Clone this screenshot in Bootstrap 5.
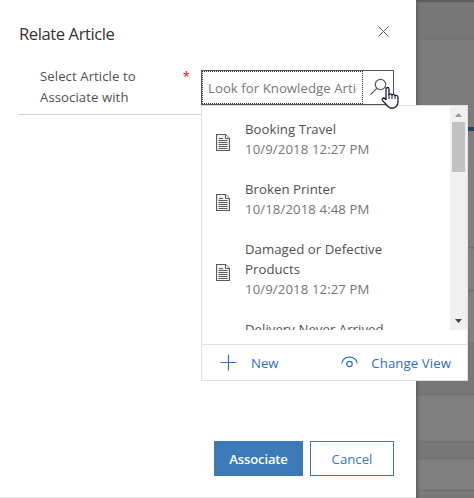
<!DOCTYPE html>
<html lang="en">
<head>
<meta charset="utf-8">
<meta name="viewport" content="width=device-width, initial-scale=1">
<title>Relate Article</title>
<link href="https://cdn.jsdelivr.net/npm/bootstrap@5.3.0/dist/css/bootstrap.min.css" rel="stylesheet">
<style>
body{font-family:"Open Sans","Noto Sans",sans-serif;font-size:13.2px;line-height:20px;color:#505050;height:498px}
.dialog-pane{width:416px;height:498px;border-bottom:1px solid #e6e6e6}
.page-behind{width:58px;height:498px;background:#7b7b7b;box-shadow:inset 3px 0 3px -1px #606060}
.page-behind div{flex:none}
.b-top{height:2px;background:#5c5c5c}
.b-head{height:38px;background:#777}
.b-mid{height:87px}
.b-blue{height:4px;background:#1f4266}
.b-line{height:1px;background:#6f6f6f}
.b-light{background:#808080}
.b-dark{background:#777}
.page-behind .b-light,.page-behind .b-dark,.page-behind .b-head,.page-behind .b-top{box-shadow:inset 3px 0 3px -1px #606060}
.dialog-title{font-size:16.6px;line-height:24px;color:#333;letter-spacing:-.42px;padding:22px 0 0 19px;height:65px}
.close-x{padding:25px 26px 0 0}
.field-row{margin-left:19px;width:182px;height:50px;border-bottom:1px solid #d2d2d2;padding:1px 0 0 21px;line-height:21px;letter-spacing:.06px}
.req{color:#f00;margin-right:11px;line-height:20px;font-size:13px}
.lookup{width:193px;height:35px;margin-top:5px;border:1px solid #555;color:#777}
.lookup-text{width:161px;border:1px dotted #333;padding-left:5px;line-height:32px;overflow:hidden;white-space:nowrap}
.lookup-text span{display:block;width:149px;overflow:hidden;letter-spacing:.04px}
.flyout{left:201px;top:105px;width:267px;height:276px;border:1px solid #e0e0e0;background:#fff}
.results{height:224px;overflow:hidden;padding-top:4px}
.result{padding:10px 0;line-height:20px;letter-spacing:.04px}
.result>div{margin-top:-1px;margin-bottom:1px}
.result svg{margin:0 15px 0 14px;position:relative;top:2px}
.result small{display:block;font-size:13.2px;color:#757575;letter-spacing:.1px}
.track{width:17px;height:224px;background:#f0f0f0}
.thumb{width:13px;height:50px;background:#c1c1c1;margin-top:5px}
.flyout-foot{margin-top:14px;height:36px;border-top:1px solid #e0e0e0;color:#2b6fc2}
.action{height:35px;border-radius:0;font-size:13.2px;line-height:20px;padding:0;border:1px solid #3b79b7}
.actions{margin:326px 0 0 214px}
.a-go{width:89px;background:#3b79b7;color:#fff;font-weight:600;letter-spacing:-.2px}
.a-no{width:84px;background:#fff;color:#3b79b7}
.pointer{left:381px;top:86px}
</style>
</head>
<body class="m-0 overflow-hidden position-relative">
<div class="d-flex">
  <main class="dialog-pane bg-white flex-shrink-0">
    <header class="d-flex justify-content-between">
      <h1 class="dialog-title m-0 fw-normal">Relate Article</h1>
      <div class="close-x"><svg class="d-block" width="13" height="13" viewBox="0 0 13 13" stroke="#555" fill="none"><path d="M1.5 1.5l10 10M11.5 1.5l-10 10"/></svg></div>
    </header>
    <div class="d-flex">
      <div class="field-row d-flex justify-content-between flex-shrink-0"><label>Select Article to<br>Associate with</label><span class="req">*</span></div>
      <div class="lookup d-flex flex-shrink-0">
        <div class="lookup-text flex-shrink-0"><span>Look for Knowledge Articles</span></div>
        <svg width="29" height="33" viewBox="0 0 29 33" fill="none" stroke="#555" stroke-width="1.2"><circle cx="17.500" cy="13.5" r="5.2"/><path d="M13.800 17.3L7.500 23.6"/></svg>
      </div>
    </div>
    <div class="actions d-flex">
      <button class="btn action a-go" type="button">Associate</button>
      <button class="btn action a-no" type="button" style="margin-left:7px">Cancel</button>
    </div>
  </main>
  <aside class="page-behind d-flex flex-column flex-shrink-0">
    <div class="b-top"></div><div class="b-head"></div><div class="b-mid"></div><div class="b-blue"></div>
    <div class="b-light" style="height:116px"></div><div class="b-line"></div>
    <div class="b-light" style="height:42px"></div><div class="b-line"></div>
    <div class="b-light" style="height:52px"></div>
    <div class="b-dark" style="height:52px"></div>
    <div class="b-light" style="height:46px"></div>
    <div class="b-dark" style="height:18px"></div>
    <div class="b-light" style="height:31px"></div><div class="b-line"></div>
  </aside>
</div>

<section class="flyout position-absolute">
  <div class="d-flex">
    <div class="results flex-grow-1">
      <div class="result d-flex align-items-center"><svg width="14" height="17" viewBox="0 0 14 17" fill="#f2f2f2" stroke="#5a5a5a"><path d="M.5.5h9l4 4v12H.5z" stroke-width="1.200"/><path d="M9.5.5v4h4M3 4.500h4M2.500 6.5h9M2.500 8.5h9M2.500 10.5h9M2.500 12.5h9M2.500 14.5h9"/></svg><div>Booking Travel<small>10/9/2018 12:27 PM</small></div></div>
      <div class="result d-flex align-items-center"><svg width="14" height="17" viewBox="0 0 14 17" fill="#f2f2f2" stroke="#5a5a5a"><path d="M.5.5h9l4 4v12H.5z" stroke-width="1.200"/><path d="M9.5.5v4h4M3 4.500h4M2.500 6.5h9M2.500 8.5h9M2.500 10.5h9M2.500 12.5h9M2.500 14.5h9"/></svg><div>Broken Printer<small>10/18/2018 4:48 PM</small></div></div>
      <div class="result d-flex align-items-center"><svg width="14" height="17" viewBox="0 0 14 17" fill="#f2f2f2" stroke="#5a5a5a"><path d="M.5.5h9l4 4v12H.5z" stroke-width="1.200"/><path d="M9.5.5v4h4M3 4.500h4M2.500 6.5h9M2.500 8.5h9M2.500 10.5h9M2.500 12.5h9M2.500 14.5h9"/></svg><div>Damaged or Defective<br>Products<small>10/9/2018 12:27 PM</small></div></div>
      <div class="result d-flex"><div style="margin-left:43px">Delivery Never Arrived</div></div>
    </div>
    <div class="track d-flex flex-column align-items-center flex-shrink-0">
      <svg class="flex-shrink-0" style="margin-top:7px" width="7" height="4" viewBox="0 0 7 4"><path d="M0 4L3.500 0 7 4z" fill="#999"/></svg>
      <div class="thumb"></div>
      <svg class="mt-auto flex-shrink-0" style="margin-bottom:7px" width="7" height="4" viewBox="0 0 7 4"><path d="M0 0h7L3.500 4z" fill="#444"/></svg>
    </div>
  </div>
  <div class="flyout-foot d-flex align-items-center">
    <svg width="17" height="17" viewBox="0 0 17 17" style="margin-left:18px" stroke="#2b6fc2" stroke-width="1.2" fill="none"><path d="M8.500.5v16M.5 8.500h16"/></svg>
    <span style="margin-left:14px">New</span>
    <svg class="ms-auto" width="17" height="13" viewBox="0 0 17 13" stroke="#2b6fc2" stroke-width="1.200" fill="none"><path d="M.7 7.500C2.500-1 14.500-1 16.300 7.500"/><circle cx="8.500" cy="8" r="2.700"/></svg>
    <span style="margin:0 16px 0 13px;letter-spacing:.1px">Change View</span>
  </div>
</section>

<svg class="pointer position-absolute" width="20" height="26" viewBox="0 0 20 26"><path d="M5 14V3.200Q5 1.500 6.500 1.500T8 3.200V8.500Q9.500 7 11 9Q12.500 7.500 14 9.700Q17 8.500 17 12V16Q17 19 15 20.500Q11 24 7 20.500L1.500 14.500Q.5 12.500 2.500 12Q4 12 5 14z" fill="#fff" stroke="#1b1b33" stroke-width="1.300"/><path d="M8 8v5M11 9v4M14 10v3" stroke="#1b1b33" fill="none"/></svg>
<script src="https://cdn.jsdelivr.net/npm/bootstrap@5.3.0/dist/js/bootstrap.bundle.min.js"></script>
</body>
</html>
